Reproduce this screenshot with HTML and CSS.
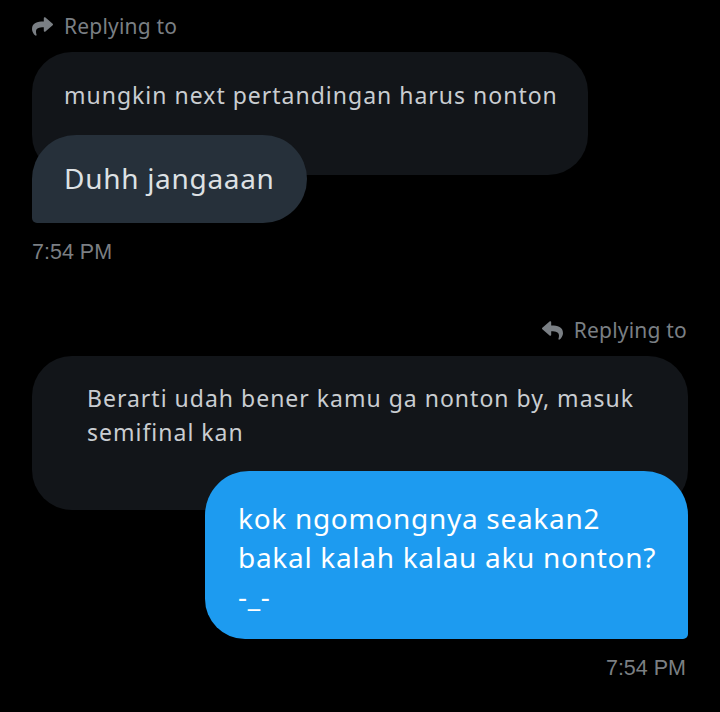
FILE: index.html
```html
<!DOCTYPE html>
<html lang="id">
<head>
    <meta charset="UTF-8">
    <meta name="viewport" content="width=device-width, initial-scale=1.0">
    <title>Pesan</title>
    <link rel="stylesheet" href="styles.css">
</head>
<body>
    <div class="chat">
        <!-- pesan masuk -->
        <div class="group">
            <div class="replying">
                <svg class="reply-icon" viewBox="0 0 512 512"><path d="M503.7 189.8L327.7 37.9C312.3 24.5 288 35.3 288 56v80.1C127.4 137.9 0 170.1 0 322.3c0 61.4 39.6 122.3 83.3 154.1 13.7 9.9 33.1-2.5 28.1-18.6C66.1 312.8 132.9 274.3 288 272.1V360c0 20.7 24.3 31.5 39.7 18.2l176-152c11.1-9.6 11.1-26.8 0-36.4z"/></svg>
                <span>Replying to</span>
            </div>
            <div class="quote quote-in">mungkin next pertandingan harus nonton</div>
            <div class="bubble bubble-in">Duhh jangaaan</div>
            <div class="time">7:54 PM</div>
        </div>

        <!-- pesan keluar -->
        <div class="group group-out">
            <div class="replying">
                <svg class="reply-icon flip" viewBox="0 0 512 512"><path d="M503.7 189.8L327.7 37.9C312.3 24.5 288 35.3 288 56v80.1C127.4 137.9 0 170.1 0 322.3c0 61.4 39.6 122.3 83.3 154.1 13.7 9.9 33.1-2.5 28.1-18.6C66.1 312.8 132.9 274.3 288 272.1V360c0 20.7 24.3 31.5 39.7 18.2l176-152c11.1-9.6 11.1-26.8 0-36.4z"/></svg>
                <span>Replying to</span>
            </div>
            <div class="quote quote-out">Berarti udah bener kamu ga nonton by, masuk<br>semifinal kan</div>
            <div class="bubble bubble-out">kok ngomongnya seakan2<br>bakal kalah kalau aku nonton?<br>-_-</div>
            <div class="time">7:54 PM</div>
        </div>
    </div>
</body>
</html>
```

FILE: styles.css
```css
body {
    margin: 0;
    background: #000;
    font-family: "Noto Sans", "Open Sans", sans-serif;
}
.chat {
    width: 720px;
    height: 712px;
    padding: 12px 32px 0 32px;
    box-sizing: border-box;
    overflow: hidden;
}
.group {
    display: flex;
    flex-direction: column;
    align-items: flex-start;
}
.group-out {
    align-items: flex-end;
    margin-top: 51px;
}
.replying {
    display: flex;
    align-items: center;
    gap: 11px;
    height: 28px;
    color: #7a7f84;
    font-size: 21px;
    letter-spacing: 0.2px;
}
.group-out .replying {
    margin-right: 1px;
}
.reply-icon {
    width: 21px;
    height: 21px;
    fill: #7a7f84;
}
.flip {
    transform: scaleX(-1);
}
.quote {
    background: #121519;
    color: #c9cdd1;
    font-size: 23px;
    line-height: 34px;
    border-radius: 40px;
    box-sizing: border-box;
    letter-spacing: 1px;
    white-space: nowrap;
}
.quote-in {
    margin-top: 12px;
    width: 556px;
    height: 123px;
    padding: 26px 20px 0 32px;
}
.quote-out {
    margin-top: 12px;
    width: 656px;
    height: 154px;
    padding: 25px 20px 0 55px;
}
.bubble {
    box-sizing: border-box;
    font-size: 28px;
    letter-spacing: 0.7px;
    white-space: nowrap;
}
.bubble-in {
    margin-top: -40px;
    background: #26303a;
    color: #dde1e4;
    height: 88px;
    padding: 25px 32px 0 32px;
    line-height: 36px;
    border-radius: 44px 44px 44px 5px;
}
.bubble-out {
    margin-top: -39px;
    background: #1d9bf0;
    color: #fff;
    width: 483px;
    height: 168px;
    padding: 28px 20px 0 33px;
    line-height: 39px;
    border-radius: 44px 44px 5px 40px;
}
.time {
    margin-top: 17px;
    font-family: "Liberation Sans", Arial, sans-serif;
    font-size: 21.5px;
    color: #7b7f83;
}
.group-out .time {
    margin-top: 17px;
    margin-right: 2px;
}
```
